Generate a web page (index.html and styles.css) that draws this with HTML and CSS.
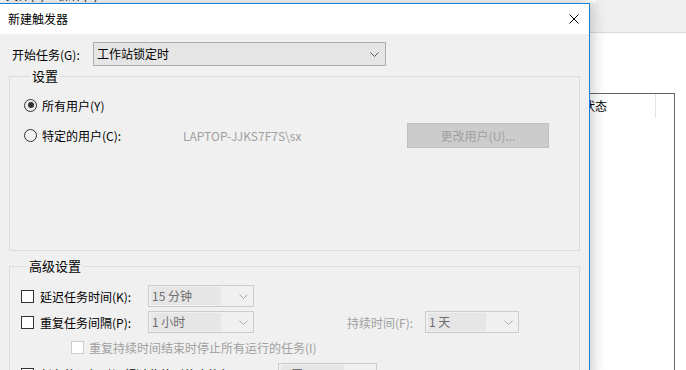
FILE: index.html
```html
<!DOCTYPE html>
<html lang="zh-CN">
<head>
    <meta charset="UTF-8">
    <title>新建触发器</title>
    <link rel="stylesheet" href="styles.css">
</head>
<body>

<div class="desktop">
    <!-- main window behind the dialog -->
    <div class="back">
        <div class="back-top">
            <div class="menubar"><span>文件(F)</span><span>操作(A)</span></div>
        </div>
        <div class="back-body">
            <div class="list">
                <div class="list-head">
                    <div class="col">状态</div>
                    <div class="col-rest"></div>
                </div>
            </div>
        </div>
    </div>

    <!-- dialog -->
    <div class="dialog">
        <div class="titlebar">
            <span class="title">新建触发器</span>
            <svg class="close" width="10" height="10" viewBox="0 0 10 10">
                <path d="M0.5 0.5 L9.5 9.5 M9.5 0.5 L0.5 9.5" stroke="#000" stroke-width="1" fill="none"/>
            </svg>
        </div>

        <div class="dialog-body">
            <div class="start-row">
                <span class="start-label">开始任务(G):</span>
                <div class="combo">
                    <span class="combo-text">工作站锁定时</span>
                    <svg class="chev" width="9" height="5" viewBox="0 0 9 5"><path d="M0.5 0.5 L4.5 4.5 L8.5 0.5" stroke="#555" fill="none"/></svg>
                </div>
            </div>

            <fieldset class="group group-settings">
                <legend>设置</legend>
                <div class="opt-row">
                    <span class="radio on"></span>
                    <span class="opt-label">所有用户(Y)</span>
                </div>
                <div class="opt-row user-row">
                    <span class="radio"></span>
                    <span class="opt-label user-label">特定的用户(C):</span>
                    <span class="user-name">LAPTOP-JJKS7F7S\sx</span>
                    <button class="btn" disabled>更改用户(U)...</button>
                </div>
            </fieldset>

            <fieldset class="group group-adv">
                <legend>高级设置</legend>
                <div class="adv-row">
                    <span class="check"></span>
                    <span class="adv-label">延迟任务时间(K):</span>
                    <div class="dcombo w106"><span class="dcombo-text">15 分钟</span><svg class="chev" width="9" height="5" viewBox="0 0 9 5"><path d="M0.5 0.5 L4.5 4.5 L8.5 0.5" stroke="#aaa" fill="none"/></svg></div>
                </div>
                <div class="adv-row r2">
                    <span class="check"></span>
                    <span class="adv-label">重复任务间隔(P):</span>
                    <div class="dcombo w106"><span class="dcombo-text">1 小时</span><svg class="chev" width="9" height="5" viewBox="0 0 9 5"><path d="M0.5 0.5 L4.5 4.5 L8.5 0.5" stroke="#aaa" fill="none"/></svg></div>
                    <span class="dur-label">持续时间(F):</span>
                    <div class="dcombo w94"><span class="dcombo-text">1 天</span><svg class="chev" width="9" height="5" viewBox="0 0 9 5"><path d="M0.5 0.5 L4.5 4.5 L8.5 0.5" stroke="#aaa" fill="none"/></svg></div>
                </div>
                <div class="adv-row r3">
                    <span class="check off"></span>
                    <span class="sub-label">重复持续时间结束时停止所有运行的任务(I)</span>
                </div>
                <div class="adv-row r4">
                    <span class="check"></span>
                    <span class="adv-label long">任务的运行时间超过此值则停止执行(L):</span>
                    <div class="dcombo w99"><span class="dcombo-text">1 天</span><svg class="chev" width="9" height="5" viewBox="0 0 9 5"><path d="M0.5 0.5 L4.5 4.5 L8.5 0.5" stroke="#aaa" fill="none"/></svg></div>
                </div>
            </fieldset>
        </div>
    </div>
</div>

</body>
</html>
```

FILE: styles.css
```css
body {
    margin: 0;
    padding: 0;
    font-family: "Noto Sans CJK SC", "Noto Sans", sans-serif;
    font-size: 12px;
    color: #000;
}

.desktop {
    position: relative;
    width: 686px;
    height: 370px;
    overflow: hidden;
    background-color: #f0f0f0;
}

/* background window */
.back {
    position: absolute;
    left: 0;
    top: 0;
    width: 686px;
    height: 370px;
    display: flex;
    flex-direction: column;
}

.back-top {
    height: 32px;
    background-color: #f0f0f0;
    border-bottom: 1px solid #dadada;
}

.menubar {
    width: 590px;
    height: 3px;
    overflow: hidden;
    background-color: #fff;
    display: flex;
    gap: 14px;
    padding-left: 6px;
}

.menubar span {
    line-height: 16px;
    margin-top: -13px;
}

.back-body {
    flex: 1;
    background-color: #fff;
    padding-top: 60px;
    display: flex;
    justify-content: flex-end;
}

.list {
    width: 300px;
    margin-right: 11px;
    border: 1px solid #646464;
    border-bottom: none;
}

.list-head {
    display: flex;
    justify-content: flex-end;
    height: 24px;
}

.col {
    width: 72px;
    padding-left: 1px;
    border-right: 1px solid #e5e5e5;
    line-height: 24px;
}

.col-rest {
    width: 18px;
}

/* dialog */
.dialog {
    position: absolute;
    left: -2px;
    top: 3px;
    width: 592px;
    height: 380px;
    box-sizing: border-box;
    border: 1px solid #1883d7;
    background-color: #f0f0f0;
    box-shadow: 0 0 16px rgba(0, 0, 0, 0.28);
    overflow: hidden;
}

.titlebar {
    height: 30px;
    background-color: #fff;
    display: flex;
    align-items: center;
    justify-content: space-between;
}

.title {
    padding-left: 9px;
    line-height: 16px;
}

.close {
    margin-right: 10px;
}

.dialog-body {
    padding: 8px 9px 0 10px;
}

.start-row {
    display: flex;
    align-items: center;
    height: 24px;
}

.start-label {
    width: 81px;
    padding-left: 3px;
}

.combo {
    width: 293px;
    height: 24px;
    box-sizing: border-box;
    border: 1px solid #adadad;
    background-color: #e5e5e5;
    display: flex;
    align-items: center;
    justify-content: space-between;
}

.combo-text {
    padding-left: 3px;
    line-height: 16px;
}

.chev {
    margin-right: 6px;
}

.group {
    margin: 2px 0 0 0;
    padding: 11px 0 0 0;
    box-sizing: border-box;
    border: 1px solid #dcdcdc;
}

.group legend {
    margin-left: 6px;
    padding: 0 2px;
    line-height: 16px;
    font-size: 13px;
}

.group-settings {
    height: 183px;
    padding-left: 14px;
}

.group-adv {
    margin-top: 7px;
    height: 200px;
    padding-left: 11px;
}

.opt-row {
    display: flex;
    align-items: center;
    height: 20px;
}

.user-row {
    margin-top: 8px;
    height: 25px;
}

.radio {
    width: 13px;
    height: 13px;
    box-sizing: border-box;
    border: 1px solid #333;
    border-radius: 50%;
    display: flex;
    align-items: center;
    justify-content: center;
}

.radio.on::after {
    content: "";
    width: 6px;
    height: 6px;
    border-radius: 50%;
    background-color: #333;
}

.opt-label {
    margin-left: 5px;
}

.user-label {
    width: 141px;
}

.user-name {
    width: 224px;
    color: #a0a0a0;
}

.btn {
    width: 142px;
    height: 25px;
    box-sizing: border-box;
    border: 1px solid #bfbfbf;
    background-color: #cccccc;
    color: #a0a0a0;
    font-family: inherit;
    font-size: 12px;
    padding: 0;
}

.adv-row {
    display: flex;
    align-items: center;
    height: 22px;
}

.adv-row.r2 {
    margin-top: 4px;
}

.adv-row.r3 {
    margin-top: 3px;
    padding-left: 50px;
}

.adv-row.r4 {
    margin-top: 5px;
}

.check {
    width: 13px;
    height: 13px;
    box-sizing: border-box;
    border: 1px solid #333;
    background-color: #fff;
}

.check.off {
    border-color: #cccccc;
}

.adv-label {
    width: 108px;
    margin-left: 6px;
}

.adv-label.long {
    width: 238px;
}

.sub-label {
    margin-left: 5px;
    color: #a0a0a0;
}

.dur-label {
    margin-left: 93px;
    width: 78px;
    color: #a0a0a0;
}

.dcombo {
    height: 22px;
    box-sizing: border-box;
    border: 1px solid #cccccc;
    background-color: #f0f0f0;
    display: flex;
    align-items: center;
    justify-content: space-between;
}

.dcombo .chev {
    margin-right: 5px;
}

.dcombo-text {
    margin-left: 2px;
    height: 18px;
    line-height: 18px;
    padding-left: 1px;
    background-color: #e6e6e6;
    color: #6d6d6d;
    flex: 1;
    margin-right: 18px;
}

.w106 {
    width: 106px;
}

.w94 {
    width: 94px;
}

.w99 {
    width: 99px;
}
```
